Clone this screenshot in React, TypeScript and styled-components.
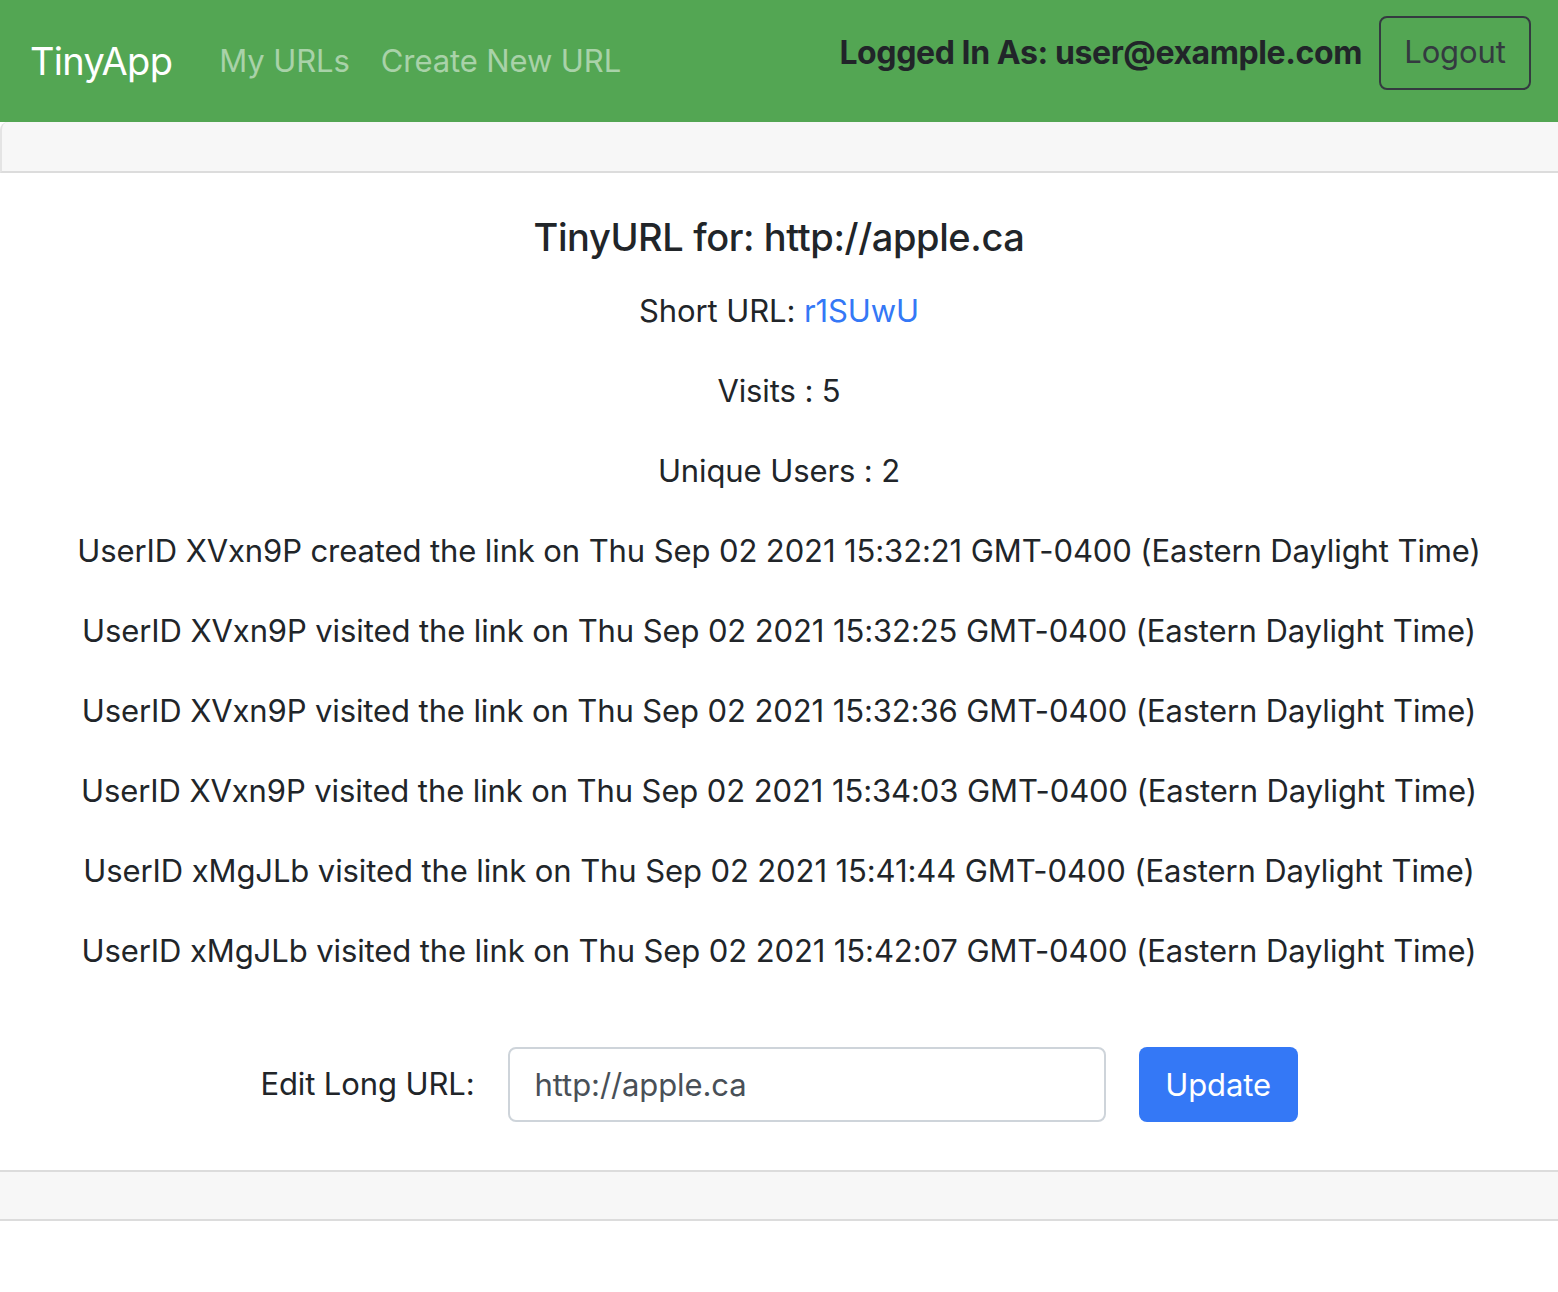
import React from "react";
import styled, { createGlobalStyle } from "styled-components";

const Global = createGlobalStyle`
  html, body { margin: 0; padding: 0; background: #fff; }
  body {
    font-family: Inter, "Noto Sans", "Liberation Sans", sans-serif;
    color: #212529;
    font-size: 31px;
    letter-spacing: -0.1px;
    line-height: 1.5;
  }
  * { box-sizing: border-box; }
`;

const Navbar = styled.nav`
  height: 122px;
  background: #53a653;
  display: flex;
  align-items: center;
  padding: 0 27px 0 30px;
`;

const Brand = styled.a`
  color: #fff;
  font-size: 38px;
  letter-spacing: -0.7px;
  line-height: 1.5;
  margin-right: 32px;
  text-decoration: none;
`;

const NavLinks = styled.div`
  display: flex;
  flex: 1;
`;

const NavLink = styled.a`
  color: rgba(255, 255, 255, 0.5);
  font-size: 31px;
  padding: 0 16px 0 15px;
  text-decoration: none;
`;

const Account = styled.div`
  display: flex;
  align-items: center;
  gap: 17px;
  margin-bottom: 17px;
`;

const LoggedIn = styled.span`
  font-weight: 700;
  font-size: 32px;
  letter-spacing: -0.4px;
  color: #212529;
`;

const OutlineButton = styled.button`
  font-family: inherit;
  font-size: 31px;
  letter-spacing: -0.1px;
  line-height: 1.5;
  color: #343a40;
  background: transparent;
  border: 2px solid #343a40;
  border-radius: 8px;
  width: 152px;
  height: 74px;
  padding: 0;
`;

const Card = styled.div`
  border-top-left-radius: 8px;
  border-top-right-radius: 8px;
`;

const CardBar = styled.div<{ $top?: boolean }>`
  height: 51px;
  background: #f7f7f7;
  ${(p) =>
    p.$top
      ? `border-bottom: 2px solid #dcdcdc; border-left: 2px solid #e4e4e4; border-top-left-radius: 8px;`
      : `border-top: 2px solid #dcdcdc; border-bottom: 2px solid #dcdcdc;`}
`;

const CardBody = styled.div`
  padding: 40px 40px 48px;
  text-align: center;
`;

const Title = styled.h5`
  font-size: 38px;
  letter-spacing: -0.4px;
  font-weight: 500;
  line-height: 48px;
  margin: 0 0 26px;
`;

const Line = styled.p`
  margin: 0 0 32px;
  line-height: 48px;
`;

const Link = styled.a`
  color: #3478f6;
  text-decoration: none;
`;

const EditForm = styled.form`
  display: flex;
  justify-content: center;
  align-items: center;
  gap: 33px;
  margin-top: 72px;
`;

const Label = styled.label`
  color: #212529;
`;

const Input = styled.input`
  width: 598px;
  height: 75px;
  border: 2px solid #ced4da;
  border-radius: 8px;
  padding: 0 25px;
  font-family: inherit;
  font-size: 31px;
  letter-spacing: -0.1px;
  color: #495057;
  outline: none;
`;

const PrimaryButton = styled.button`
  height: 75px;
  width: 159px;
  border: none;
  border-radius: 8px;
  background: #3478f6;
  color: #fff;
  font-family: inherit;
  font-size: 31px;
  letter-spacing: -0.1px;
`;

const visits = [
  "UserID XVxn9P created the link on Thu Sep 02 2021 15:32:21 GMT-0400 (Eastern Daylight Time)",
  "UserID XVxn9P visited the link on Thu Sep 02 2021 15:32:25 GMT-0400 (Eastern Daylight Time)",
  "UserID XVxn9P visited the link on Thu Sep 02 2021 15:32:36 GMT-0400 (Eastern Daylight Time)",
  "UserID XVxn9P visited the link on Thu Sep 02 2021 15:34:03 GMT-0400 (Eastern Daylight Time)",
  "UserID xMgJLb visited the link on Thu Sep 02 2021 15:41:44 GMT-0400 (Eastern Daylight Time)",
  "UserID xMgJLb visited the link on Thu Sep 02 2021 15:42:07 GMT-0400 (Eastern Daylight Time)",
];

export default function App() {
  return (
    <>
      <Global />
      <Navbar>
        <Brand href="#">TinyApp</Brand>
        <NavLinks>
          <NavLink href="#">My URLs</NavLink>
          <NavLink href="#">Create New URL</NavLink>
        </NavLinks>
        <Account>
          <LoggedIn>Logged In As: user@example.com</LoggedIn>
          <OutlineButton type="button">Logout</OutlineButton>
        </Account>
      </Navbar>
      <Card>
        <CardBar $top />
        <CardBody>
          <Title>TinyURL for: http://apple.ca</Title>
          <Line>
            Short URL: <Link href="#">r1SUwU</Link>
          </Line>
          <Line>Visits : 5</Line>
          <Line>Unique Users : 2</Line>
          {visits.map((v) => (
            <Line key={v}>{v}</Line>
          ))}
          <EditForm onSubmit={(e) => e.preventDefault()}>
            <Label>Edit Long URL:</Label>
            <Input defaultValue="http://apple.ca" />
            <PrimaryButton type="submit">Update</PrimaryButton>
          </EditForm>
        </CardBody>
        <CardBar />
      </Card>
    </>
  );
}
